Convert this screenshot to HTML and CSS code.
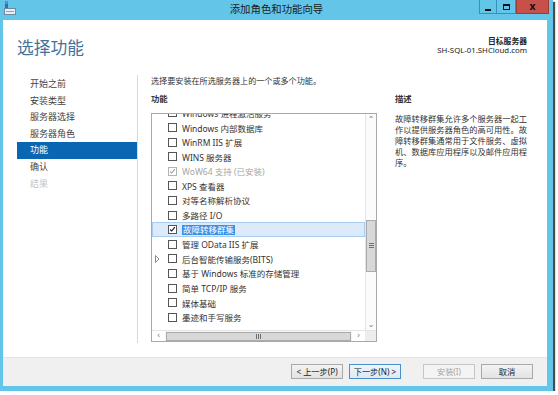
FILE: index.html
```html
<!DOCTYPE html>
<html lang="zh-CN">
<head>
    <meta charset="UTF-8">
    <meta name="viewport" content="width=device-width, initial-scale=1.0">
    <title>添加角色和功能向导</title>
    <link rel="stylesheet" href="styles.css">
</head>
<body>
    <div class="window">
        <div class="titlebar">
            <svg class="app-icon" width="12" height="14" viewBox="0 0 12 14">
                <rect x="1" y="0.5" width="3" height="7" fill="#2f6fb8"/>
                <rect x="1.5" y="1.5" width="2" height="1" fill="#9cc9ee"/>
                <rect x="0.5" y="7.5" width="11" height="6" fill="#e9eef2" stroke="#6f8aa0"/>
                <rect x="2" y="10" width="8" height="1" fill="#8da4b6"/>
            </svg>
            <div class="title">添加角色和功能向导</div>
            <div class="controls">
                <span class="ctl min"><i></i></span>
                <span class="ctl max"><i></i></span>
                <span class="ctl close">x</span>
            </div>
        </div>

        <div class="client">
            <div class="header">
                <h1>选择功能</h1>
                <div class="target">
                    <div class="target-label">目标服务器</div>
                    <div>SH-SQL-01.SHCloud.com</div>
                </div>
            </div>

            <div class="main">
                <ul class="steps">
                    <li>开始之前</li>
                    <li>安装类型</li>
                    <li>服务器选择</li>
                    <li>服务器角色</li>
                    <li class="active">功能</li>
                    <li>确认</li>
                    <li class="disabled">结果</li>
                </ul>

                <div class="content">
                    <p class="intro">选择要安装在所选服务器上的一个或多个功能。</p>
                    <div class="columns">
                        <div class="features">
                            <div class="col-head">功能</div>
                            <div class="listbox">
                                <div class="list-view">
                                    <ul class="list">
                                        <li><span class="exp"></span><span class="box"></span>Windows 进程激活服务</li>
                                        <li><span class="exp"></span><span class="box"></span>Windows 内部数据库</li>
                                        <li><span class="exp"></span><span class="box"></span>WinRM IIS 扩展</li>
                                        <li><span class="exp"></span><span class="box"></span>WINS 服务器</li>
                                        <li class="installed"><span class="exp"></span><span class="box checked"><svg viewBox="0 0 9 9"><polyline points="1.5,4.5 3.5,6.5 7.5,1.5"/></svg></span>WoW64 支持 (已安装)</li>
                                        <li><span class="exp"></span><span class="box"></span>XPS 查看器</li>
                                        <li><span class="exp"></span><span class="box"></span>对等名称解析协议</li>
                                        <li><span class="exp"></span><span class="box"></span>多路径 I/O</li>
                                        <li class="selected"><span class="exp"></span><span class="box checked"><svg viewBox="0 0 9 9"><polyline points="1.5,4.5 3.5,6.5 7.5,1.5"/></svg></span><span class="hl">故障转移群集</span></li>
                                        <li><span class="exp"></span><span class="box"></span>管理 OData IIS 扩展</li>
                                        <li><span class="exp"><svg viewBox="0 0 5 8"><polygon points="0.5,0.5 4,4 0.5,7.5"/></svg></span><span class="box"></span>后台智能传输服务(BITS)</li>
                                        <li><span class="exp"></span><span class="box"></span>基于 Windows 标准的存储管理</li>
                                        <li><span class="exp"></span><span class="box"></span>简单 TCP/IP 服务</li>
                                        <li><span class="exp"></span><span class="box"></span>媒体基础</li>
                                        <li><span class="exp"></span><span class="box"></span>墨迹和手写服务</li>
                                    </ul>
                                    <div class="vscroll">
                                        <span class="arrow">&#8963;</span>
                                        <span class="track-top"></span>
                                        <span class="thumb v"><i class="grip"></i></span>
                                        <span class="track-rest"></span>
                                        <span class="arrow">&#8964;</span>
                                    </div>
                                </div>
                                <div class="hscroll">
                                    <span class="arrow">&#8249;</span>
                                    <span class="thumb h"><i class="grip"></i></span>
                                    <span class="arrow">&#8250;</span>
                                    <span class="corner"></span>
                                </div>
                            </div>
                        </div>
                        <div class="desc">
                            <div class="col-head">描述</div>
                            <p>故障转移群集允许多个服务器一起工作以提供服务器角色的高可用性。故障转移群集通常用于文件服务、虚拟机、数据库应用程序以及邮件应用程序。</p>
                        </div>
                    </div>
                </div>
            </div>

            <div class="footer">
                <button type="button">&lt; 上一步(P)</button>
                <button type="button" class="default">下一步(N) &gt;</button>
                <button type="button" class="install" disabled>安装(I)</button>
                <button type="button">取消</button>
            </div>
        </div>
    </div>
</body>
</html>
```

FILE: styles.css
```css
* {
    box-sizing: border-box;
}
body {
    margin: 0;
    background: #fff;
    font-family: "Noto Sans", "Noto Sans CJK SC", sans-serif;
    color: #333;
}
ul {
    list-style: none;
    margin: 0;
    padding: 0;
}
p {
    margin: 0;
}
.window {
    width: 553px;
    height: 391px;
    background: #63c6e8;
    padding-bottom: 5px;
    display: flex;
    flex-direction: column;
    box-shadow: 2px 2px 1px rgba(0, 0, 0, 0.7);
}
.titlebar {
    height: 20px;
    flex: none;
    display: grid;
    grid-template-columns: 1fr auto 1fr;
    align-items: start;
}
.app-icon {
    margin: 1px 0 0 4px;
}
.title {
    font-size: 10.4px;
    line-height: 19px;
    color: #1b1b1b;
}
.controls {
    justify-self: end;
    display: flex;
    margin-right: 4px;
}
.ctl {
    height: 14px;
    display: flex;
    align-items: center;
    justify-content: center;
    border: 1px solid #3592bd;
    border-top: none;
}
.ctl.min {
    width: 17px;
    border-right: none;
}
.ctl.min i {
    width: 6px;
    height: 2px;
    background: #111;
    margin-top: 6px;
}
.ctl.max {
    width: 20px;
}
.ctl.max i {
    width: 7px;
    height: 6px;
    border: 1px solid #111;
    border-top-width: 2px;
}
.ctl.close {
    width: 33px;
    background: #c7504b;
    border-color: #9b3a35;
    color: #151515;
    font-size: 10px;
    font-weight: bold;
    line-height: 12px;
    font-family: "DejaVu Sans", sans-serif;
}
.client {
    flex: 1;
    margin: 0 6px 0 3px;
    background: #fff;
    display: flex;
    flex-direction: column;
}
.header {
    height: 55px;
    flex: none;
    display: flex;
    justify-content: space-between;
    align-items: flex-start;
    padding: 17px 20px 0 14px;
}
.header h1 {
    margin: 0;
    font-size: 16.8px;
    line-height: 21px;
    font-weight: normal;
    color: #44739a;
}
.target {
    text-align: right;
    font-size: 7.8px;
    line-height: 9px;
    color: #222;
}
.target-label {
    font-weight: bold;
}
.main {
    flex: 1;
    display: flex;
    padding-bottom: 14px;
}
.steps {
    width: 121px;
    margin-left: 14px;
    padding-top: 1px;
    border-right: 1px solid #dadada;
    font-size: 9px;
}
.steps li {
    height: 16.6px;
    line-height: 16.6px;
    padding-left: 13px;
    color: #444;
}
.steps li.active {
    background: #0a66b2;
    color: #fff;
}
.steps li.disabled {
    color: #c4c4c4;
}
.content {
    margin-left: 13px;
    display: flex;
    flex-direction: column;
}
.intro {
    font-size: 8.1px;
    line-height: 12px;
    color: #333;
}
.columns {
    display: flex;
    margin-top: 6.3px;
}
.col-head {
    font-size: 8.4px;
    line-height: 12px;
    font-weight: bold;
    color: #333;
    margin-bottom: 7.5px;
}
.features {
    width: 226px;
}
.listbox {
    height: 229px;
    border: 1px solid #a9a9a9;
    display: flex;
    flex-direction: column;
}
.list-view {
    flex: 1;
    display: flex;
    min-height: 0;
}
.list {
    flex: 1;
    overflow: hidden;
    font-size: 8.5px;
    color: #333;
}
.list li:first-child {
    margin-top: -8.2px;
}
.list li {
    height: 14.6px;
    display: flex;
    align-items: center;
    padding-left: 3px;
    white-space: nowrap;
}
.list li.selected {
    background: #dcebfb;
    box-shadow: inset 0 0 0 1px #a8cdf0;
}
.list li.installed {
    color: #a5a5a5;
}
.exp {
    width: 13px;
    height: 8px;
    display: flex;
}
.exp svg {
    width: 5px;
    height: 8px;
    fill: none;
    stroke: #8a8a8a;
    stroke-width: 1;
}
.box {
    width: 9px;
    height: 9px;
    border: 1px solid #555;
    background: #fff;
    margin-right: 5px;
    display: flex;
}
.box svg {
    width: 7px;
    height: 7px;
    fill: none;
    stroke: #111;
    stroke-width: 1.4;
}
.installed .box {
    border-color: #b3b3b3;
}
.installed .box svg {
    stroke: #a0a0a0;
}
.hl {
    background: #3c8fe6;
    color: #fff;
    line-height: 10px;
    padding: 0 1px;
}
.vscroll {
    width: 11px;
    display: flex;
    flex-direction: column;
    background: #fbfbfb;
    border-left: 1px solid #e4e4e4;
}
.arrow {
    flex: none;
    width: 11px;
    height: 11px;
    display: flex;
    align-items: center;
    justify-content: center;
    font-size: 8px;
    line-height: 11px;
    color: #7a7a7a;
    font-family: "DejaVu Sans", sans-serif;
}
.vscroll .arrow {
    width: 10px;
}
.track-top {
    height: 95px;
    flex: none;
}
.track-rest {
    flex: 1;
}
.thumb {
    background: #d8d8d8;
    border: 1px solid #ababab;
    display: flex;
    align-items: center;
    justify-content: center;
}
.thumb.v {
    height: 52px;
    flex: none;
}
.thumb.v .grip {
    width: 5px;
    height: 5px;
    background: repeating-linear-gradient(#6e6e6e 0 1px, transparent 1px 2px);
}
.hscroll {
    height: 11px;
    flex: none;
    display: flex;
    background: #f5f5f5;
    border-top: 1px solid #e4e4e4;
}
.hscroll .arrow {
    width: 13px;
    height: 10px;
    background: #fff;
}
.thumb.h {
    flex: 1;
    margin: 1px 1px 0;
}
.thumb.h .grip {
    width: 5px;
    height: 5px;
    background: repeating-linear-gradient(90deg, #6e6e6e 0 1px, transparent 1px 2px);
}
.corner {
    width: 11px;
    background: #ededed;
}
.desc {
    width: 134px;
    margin-left: 18px;
}
.desc p {
    font-size: 8.25px;
    line-height: 11px;
    color: #333;
}
.footer {
    height: 29px;
    flex: none;
    display: flex;
    justify-content: flex-end;
    gap: 6px;
    padding: 6px 14px 0;
    background: #f0f0f0;
    border-top: 1px solid #e2e2e2;
}
button {
    width: 52px;
    height: 15px;
    padding: 0;
    font-family: inherit;
    font-size: 8.2px;
    line-height: 13px;
    color: #222;
    background: linear-gradient(#f3f3f3, #e3e3e3);
    border: 1px solid #a9a9a9;
}
button.default {
    border-color: #4a8fc7;
    background: linear-gradient(#eef5fb, #dde9f4);
}
button.install {
    margin-left: 16px;
    color: #a4a4a4;
    background: #f4f4f4;
    border-color: #c6c6c6;
}
```
